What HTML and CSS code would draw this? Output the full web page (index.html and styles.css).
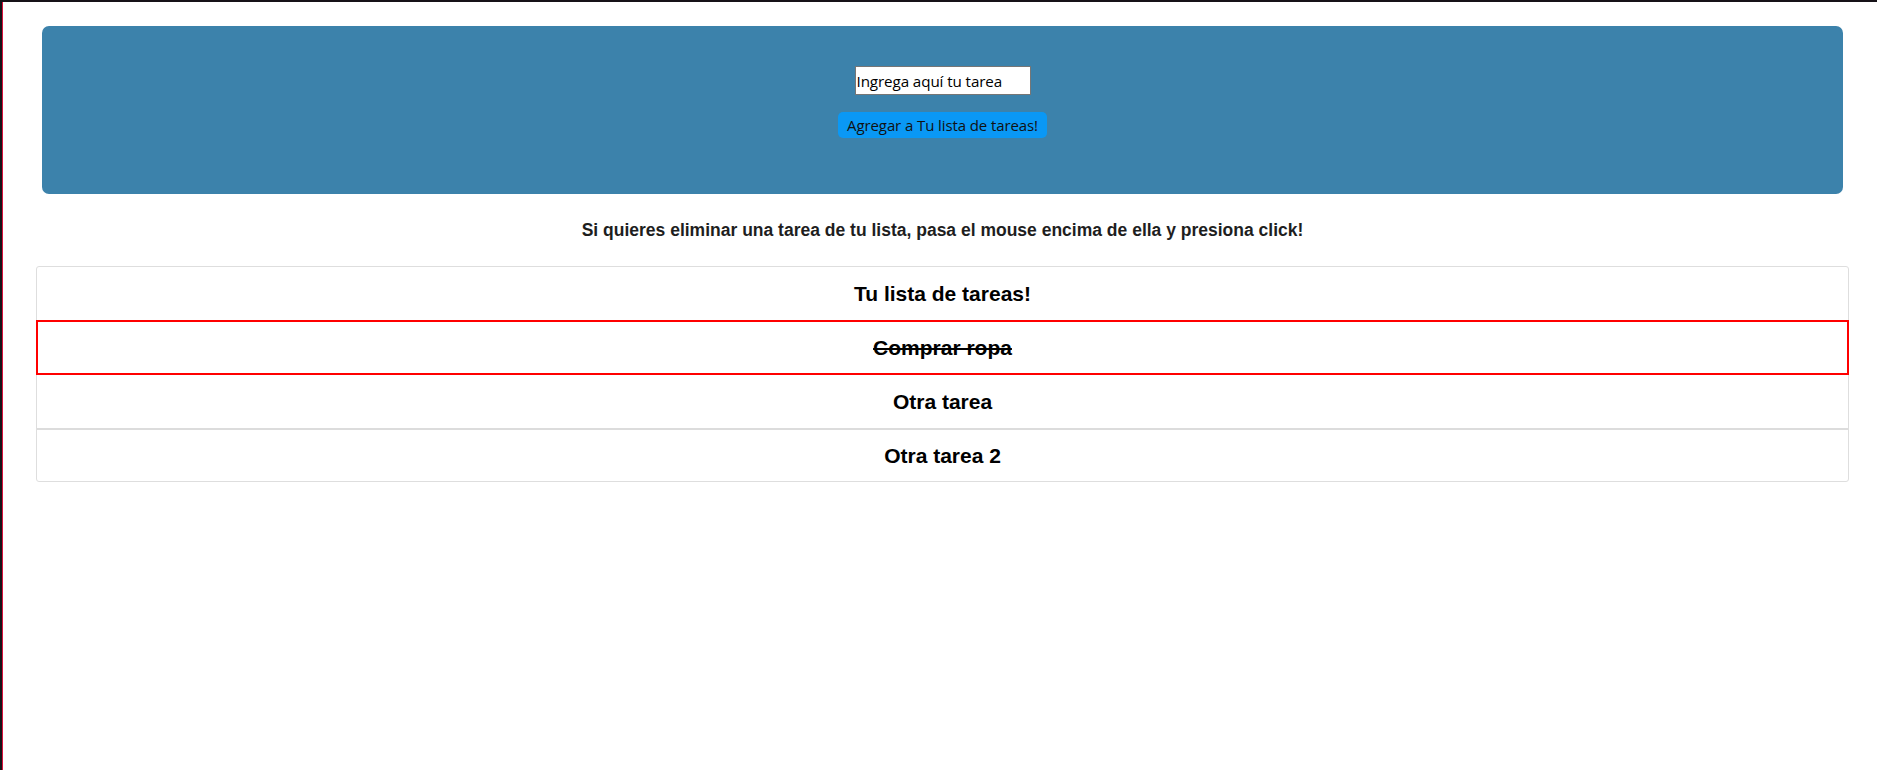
FILE: index.html
```html
<!DOCTYPE html>
<html lang="es">
<head>
<meta charset="utf-8">
<title>Lista de tareas</title>
<link rel="stylesheet" href="styles.css">
</head>
<body>
<div class="frame"></div>
<header class="hero">
  <input class="task-input" type="text" value="Ingrega aquí tu tarea">
  <button class="add-btn" type="button">Agregar a Tu lista de tareas!</button>
</header>
<p class="hint">Si quieres eliminar una tarea de tu lista, pasa el mouse encima de ella y presiona click!</p>
<ul class="list">
  <li class="item title">Tu lista de tareas!</li>
  <li class="item active"><s>Comprar ropa</s></li>
  <li class="item">Otra tarea</li>
  <li class="item thick">Otra tarea 2</li>
</ul>
</body>
</html>
```

FILE: styles.css
```css
html, body {
  margin: 0;
  padding: 0;
  background: #fff;
}
body {
  font-family: "Liberation Sans", Arial, sans-serif;
  color: #111;
  padding-top: 26px;
}
.frame {
  position: fixed;
  inset: 0;
  pointer-events: none;
  box-shadow: inset 2px 2px 0 #161218, inset 3px 0 0 #d8103c;
}
.hero {
  margin: 0 34px 0 42px;
  height: 168px;
  box-sizing: border-box;
  padding-top: 40px;
  background: #3c82ab;
  border-radius: 7px;
  display: flex;
  flex-direction: column;
  align-items: center;
}
.task-input {
  width: 176px;
  height: 29px;
  box-sizing: border-box;
  border: 1px solid #767676;
  padding: 0 1px;
  margin: 0;
  font-family: "Open Sans", "Noto Sans", sans-serif;
  font-size: 15.2px;
  letter-spacing: -0.1px;
  color: #000;
  background: #fff;
  outline: none;
}
.add-btn {
  margin-top: 17px;
  width: 209px;
  height: 26px;
  border: none;
  border-radius: 5px;
  background: #0a98f5;
  color: #111;
  font-family: "Open Sans", "Noto Sans", sans-serif;
  font-size: 15px;
  letter-spacing: -0.1px;
  padding: 0;
  line-height: 26px;
}
.hint {
  margin: 26px 0 0;
  text-align: center;
  font-weight: bold;
  font-size: 17.5px;
  color: #1e1e1e;
  line-height: 20px;
  padding-left: 8px;
}
.list {
  list-style: none;
  margin: 26px 28px 0 36px;
  padding: 0;
  border: 1px solid #dedede;
  border-radius: 3px;
}
.item {
  height: 53px;
  display: flex;
  align-items: center;
  justify-content: center;
  font-weight: bold;
  font-size: 21px;
  color: #000;
  border-top: 1px solid #dedede;
  box-sizing: border-box;
}
.item.title {
  border-top: none;
  height: 53px;
}
.item.active {
  border: 2px solid #ff0000;
  margin: 0 -1px;
  height: 55px;
}
.item.active + .item {
  border-top: none;
}
.item.thick {
  border-top: 2px solid #dcdcdc;
}
s {
  text-decoration-thickness: 2px;
}
```
